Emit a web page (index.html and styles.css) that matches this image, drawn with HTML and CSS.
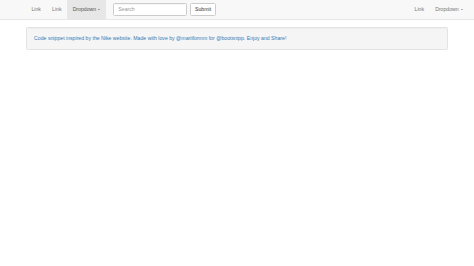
FILE: index.html
```html
<!DOCTYPE html>
<html>
<head>
<meta charset="utf-8">
<link rel="stylesheet" href="styles.css">
</head>
<body>
<nav class="navbar">
  <div class="nav-left">
    <a class="nav-link" href="#">Link</a>
    <a class="nav-link" href="#">Link</a>
    <a class="nav-link active" href="#">Dropdown <span class="caret"></span></a>
    <form class="nav-form">
      <input class="search" type="text" placeholder="Search">
      <button class="btn" type="button">Submit</button>
    </form>
  </div>
  <div class="nav-right">
    <a class="nav-link" href="#">Link</a>
    <a class="nav-link" href="#">Dropdown <span class="caret"></span></a>
  </div>
</nav>
<div class="container">
  <div class="well">Code snippet inspired by the Nike website. Made with love by @mariiformm for @bootsnipp. Enjoy and Share!</div>
</div>
</body>
</html>
```
FILE: styles.css
```css
body {
  margin: 0;
  font-family: "Liberation Sans", Arial, sans-serif;
  font-size: 5.18px;
  line-height: 7.4px;
  color: #333;
  background: #fff;
}
.navbar {
  display: flex;
  justify-content: space-between;
  height: 18.5px;
  background: #f8f8f8;
  border-bottom: 1px solid #e7e7e7;
  padding: 0 5.55px 0 25.9px;
}
.nav-left, .nav-right {
  display: flex;
  align-items: flex-start;
}
.nav-link {
  display: block;
  padding: 5.55px;
  line-height: 7.4px;
  color: #777;
  text-decoration: none;
}
.nav-link.active {
  background: #e7e7e7;
  color: #555;
}
.caret {
  display: inline-block;
  width: 0;
  height: 0;
  margin-left: 0.74px;
  vertical-align: middle;
  border-top: 1.5px solid #555;
  border-left: 1.5px solid transparent;
  border-right: 1.5px solid transparent;
}
.nav-right .caret {
  border-top-color: #777;
}
.nav-form {
  display: flex;
  gap: 3.4px;
  margin: 2.96px 0 0 7px;
}
.search {
  width: 74px;
  height: 12.6px;
  box-sizing: border-box;
  padding: 2.2px 4.4px;
  font: inherit;
  color: #555;
  border: 1px solid #ccc;
  border-radius: 1.5px;
  box-shadow: inset 0 0.4px 0.4px rgba(0,0,0,.075);
}
.search::placeholder {
  color: #999;
}
.btn {
  height: 12.6px;
  padding: 2.2px 3.7px;
  font: inherit;
  color: #333;
  background: #fff;
  border: 1px solid #ccc;
  border-radius: 1.5px;
}
.container {
  width: 421.8px;
  margin: 7.4px auto 0;
  padding: 0 5.55px;
}
.well {
  min-height: 7.4px;
  padding: 7px;
  background: #f5f5f5;
  border: 1px solid #e3e3e3;
  border-radius: 1.5px;
  box-shadow: inset 0 0.4px 0.4px rgba(0,0,0,.05);
  color: #337ab7;
}
```
